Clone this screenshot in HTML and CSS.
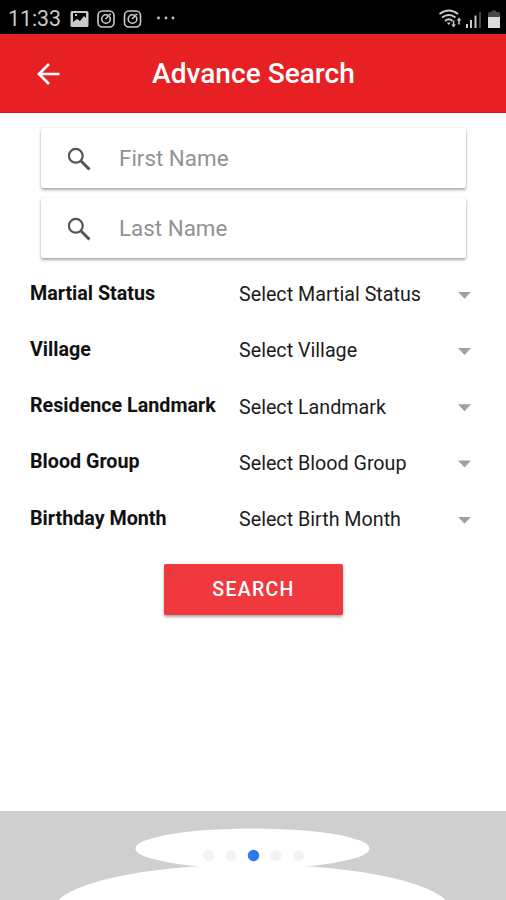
FILE: index.html
```html
<!DOCTYPE html>
<html lang="en">
<head>
<meta charset="utf-8">
<title>Advance Search</title>
<link rel="stylesheet" href="styles.css">
</head>
<body>
<div class="status">
  <span class="time">11:33</span>
  <svg class="notices" width="106" height="20" viewBox="0 0 106 20" fill="none" stroke="#c9c9c9" stroke-width="1.6">
    <path fill="#c9c9c9" stroke="none" fill-rule="evenodd" d="M2 2h15q1.500 0 1.500 1.500v13q0 1.500-1.500 1.500h-15q-1.500 0-1.500-1.500v-13q0-1.500 1.500-1.500zM3 4v9l4-3 3 2 4-5 2 2V4zM5 5h2v2h-2z"/>
    <rect x="28" y="2" width="16" height="16" rx="4.500"/><circle cx="36" cy="10" r="4.300"/><path d="M35.500 10l3-3M39 5.500h2"/>
    <rect x="54.500" y="2" width="16" height="16" rx="4.500"/><circle cx="62.500" cy="10" r="4.300"/><path d="M62 10l3-3M65.500 5.500h2"/>
    <g fill="#c9c9c9" stroke="none"><circle cx="88.500" cy="9" r="1.400"/><circle cx="96" cy="9" r="1.400"/><circle cx="103" cy="9" r="1.400"/></g>
  </svg>
  <svg class="signals" width="64" height="22" viewBox="0 0 64 22">
    <g fill="none" stroke="#c9c9c9" stroke-width="1.900"><path d="M2.500 6Q12 -1 21 6M5 9.500Q12 4.500 18.500 9.500M8 13Q12 9.500 15.500 13"/></g>
    <path fill="#c9c9c9" d="M9.800 14.500h4l-2 2.500zM15.800 12.500h1.600v4h1.500l-2.300 3-2.300-3h1.500zM21.200 16.500v-4h-1.500l2.300-3 2.300 3h-1.500v4z"/>
    <path fill="#c9c9c9" d="M29 16h2v4h-2zM33 12h2v8h-2zM37.500 7.500h2v12.500h-2z"/><path fill="#484848" d="M42 4h2v16h-2z"/>
    <path fill="#484848" d="M51 6q0-2 2-2h2V2.500h4V4h2q2 0 2 2v3H51z"/><path fill="#ddd" d="M51 9h12v11H51z"/>
  </svg>
</div>
<header class="bar">
  <svg class="back" width="24" height="24" viewBox="0 0 24 24" fill="none" stroke="#fff" stroke-width="2.700"><path d="M23.500 12H3M13 2L3 12 13 22"/></svg>
  <h1>Advance Search</h1>
</header>
<main>
  <div class="field"><svg width="24" height="24" viewBox="0 0 24 24" fill="none" stroke="#555"><circle cx="8.800" cy="8.800" r="6.900" stroke-width="2.200"/><path d="M14 14l8.500 8.500" stroke-width="3"/></svg><span>First Name</span></div>
  <div class="field"><svg width="24" height="24" viewBox="0 0 24 24" fill="none" stroke="#555"><circle cx="8.800" cy="8.800" r="6.900" stroke-width="2.200"/><path d="M14 14l8.500 8.500" stroke-width="3"/></svg><span>Last Name</span></div>
  <div class="rows">
    <div class="row"><b>Martial Status</b><span>Select Martial Status</span><i></i></div>
    <div class="row"><b>Village</b><span>Select Village</span><i></i></div>
    <div class="row"><b>Residence Landmark</b><span>Select Landmark</span><i></i></div>
    <div class="row"><b>Blood Group</b><span>Select Blood Group</span><i></i></div>
    <div class="row"><b>Birthday Month</b><span>Select Birth Month</span><i></i></div>
  </div>
  <button class="search">SEARCH</button>
</main>
<footer>
  <svg width="506" height="89" viewBox="0 811 506 89">
    <g fill="#fff"><ellipse cx="252.500" cy="848.500" rx="117" ry="20"/><ellipse cx="252" cy="910.500" rx="199" ry="46"/></g>
    <g fill="#f3f3f3"><circle cx="208.500" cy="855.500" r="5.500"/><circle cx="231" cy="855.500" r="5.500"/><circle cx="276" cy="855.500" r="5.500"/><circle cx="298.500" cy="855.500" r="5.500"/></g>
    <circle cx="253.500" cy="855.500" r="5.700" fill="#3079ed"/>
  </svg>
</footer>
</body>
</html>
```
FILE: styles.css
```css
* { box-sizing: border-box; }
body { margin: 0; height: 900px; overflow: hidden; display: flex; flex-direction: column; background: #fff; font-family: Roboto, sans-serif; color: #1c1c1c; }
.status { height: 34px; flex: none; background: #000; display: flex; align-items: center; padding: 3px 5px 0 8px; }
.time { width: 62px; font-size: 21.300px; line-height: 30px; color: #c9c9c9; white-space: nowrap; }
.signals { margin-left: auto; }
.bar { height: 79px; flex: none; background: #e72024; border-bottom: 1px solid #cf171b; display: flex; align-items: center; padding: 0 0 0 36px; }
.back { margin-top: 2px; }
h1 { margin: 2px 0 0 92px; font-size: 28.100px; line-height: 36px; font-weight: 500; color: #fff; white-space: nowrap; }
main { flex: 1; display: flex; flex-direction: column; padding-top: 15px; }
.field { width: 425px; height: 60px; margin: 0 0 10px 41px; padding: 2px 0 0 26px; flex: none; display: flex; align-items: center; border-radius: 2px; background: #fff; box-shadow: 0 2px 3px rgba(0,0,0,.32), 0 0 2px rgba(0,0,0,.1); }
.field span { margin: -2px 0 0 28px; font-size: 22.400px; line-height: 30px; color: #929292; white-space: nowrap; }
.rows { margin: -2px 35px 0 30px; }
.row { height: 56.250px; display: grid; grid-template-columns: 209px 1fr 13px; align-items: center; white-space: nowrap; }
.row b { font-size: 19.700px; line-height: 24px; font-weight: 700; margin-top: -1px; color: #111; }
.row span { font-size: 19.700px; line-height: 24px; margin-top: 2px; }
.row i { width: 13px; height: 7px; margin-top: 2px; background: #a1a1a1; clip-path: polygon(0 0, 100% 0, 50% 100%); }
.search { align-self: flex-start; width: 179px; height: 51px; margin: 17px 0 0 164px; padding: 0; border: 0; border-radius: 2px; background: #f0383f; color: #fff; font: 500 19.500px Roboto, sans-serif; letter-spacing: 1.300px; box-shadow: 0 2px 3px rgba(0,0,0,.35); }
footer { height: 89px; flex: none; background: #cfcfcf; }
footer svg { display: block; }
```
